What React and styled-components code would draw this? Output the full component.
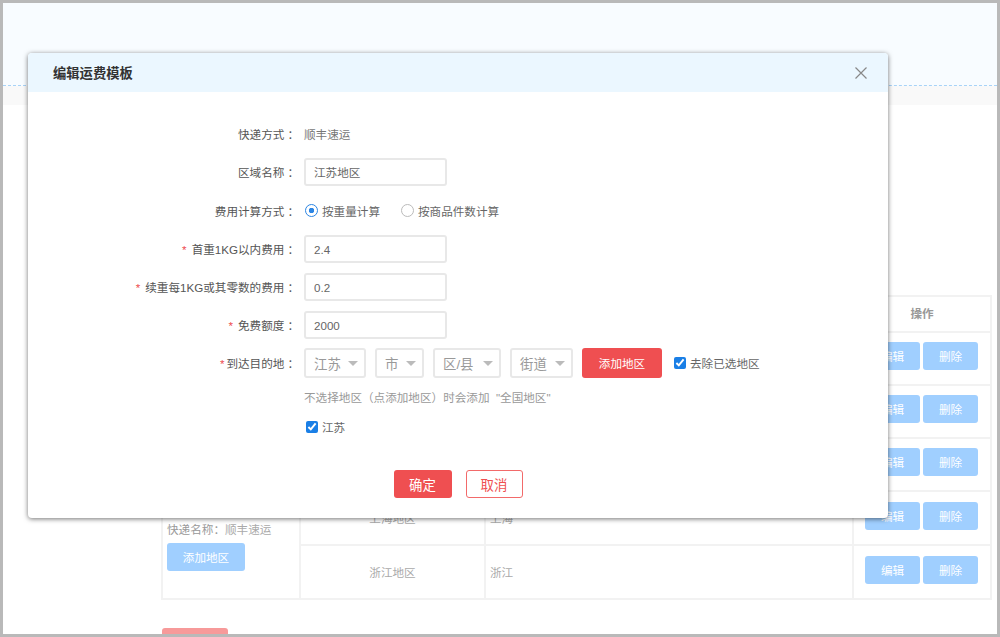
import React from 'react';
import styled, { createGlobalStyle } from 'styled-components';

const regions = [
  { name: '', area: '', height: 53 },
  { name: '', area: '', height: 53 },
  { name: '', area: '', height: 53 },
  { name: '上海地区', area: '上海', height: 54 },
  { name: '浙江地区', area: '浙江', height: 54 },
];

const fields = [
  { label: '首重1KG以内费用', value: '2.4' },
  { label: '续重每1KG或其零数的费用', value: '0.2' },
  { label: '免费额度', value: '2000' },
];

const selects = [
  { text: '江苏', width: 62 },
  { text: '市', width: 49 },
  { text: '区/县', width: 68 },
  { text: '街道', width: 63 },
];

const App = () => {
  return (
    <Page>
      <GlobalStyle />
      <Inner>
        <TopBand />
        <GreyBand />
        <TableWrap>
          <ShipTable>
            <colgroup>
              <col width="138" />
              <col width="185" />
              <col width="368" />
              <col width="138" />
            </colgroup>
            <thead>
              <tr>
                <HeadCell />
                <HeadCell />
                <HeadCell />
                <HeadCell>操作</HeadCell>
              </tr>
            </thead>
            <tbody>
              {regions.map((r, i) => (
                <BodyRow key={i} $height={r.height}>
                  {i === 0 && (
                    <InfoCell rowSpan={regions.length}>
                      <InfoText>快递名称：<span>顺丰速运</span></InfoText>
                      <LightButton $width={78}>添加地区</LightButton>
                    </InfoCell>
                  )}
                  <CenterCell>{r.name}</CenterCell>
                  <Cell>{r.area}</Cell>
                  <ActionCell>
                    <LightButton $width={55}>编辑</LightButton>
                    <LightButton $width={55}>删除</LightButton>
                  </ActionCell>
                </BodyRow>
              ))}
            </tbody>
          </ShipTable>
        </TableWrap>
        <PaleRedButton />

        <Dialog>
          <DialogHeader>
            <DialogTitle>编辑运费模板</DialogTitle>
            <CloseIcon viewBox="0 0 12 12">
              <path d="M0.5 0.5 L11.5 11.5 M11.5 0.5 L0.5 11.5" />
            </CloseIcon>
          </DialogHeader>
          <DialogBody>
            <FormRow>
              <Label>快递方式<Colon>：</Colon></Label>
              <PlainValue>顺丰速运</PlainValue>
            </FormRow>
            <FormRow>
              <Label>区域名称<Colon>：</Colon></Label>
              <TextInput defaultValue="江苏地区" />
            </FormRow>
            <FormRow $height={39}>
              <Label>费用计算方式<Colon>：</Colon></Label>
              <RadioGroup>
                <RadioItem><Radio $checked />按重量计算</RadioItem>
                <RadioItem><Radio />按商品件数计算</RadioItem>
              </RadioGroup>
            </FormRow>
            {fields.map((f) => (
              <FormRow key={f.label}>
                <Label><Star>*</Star>{f.label}<Colon>：</Colon></Label>
                <TextInput defaultValue={f.value} />
              </FormRow>
            ))}
            <FormRow>
              <Label><TightStar>*</TightStar>到达目的地<Colon>：</Colon></Label>
              <SelectRow>
                {selects.map((s) => (
                  <FakeSelect key={s.text} $width={s.width}>
                    {s.text}
                    <Caret />
                  </FakeSelect>
                ))}
                <AddButton>添加地区</AddButton>
                <CheckLabel $left={3}>
                  <CheckBox type="checkbox" defaultChecked />
                  去除已选地区
                </CheckLabel>
              </SelectRow>
            </FormRow>
            <HintRow>不选择地区（点添加地区）时会添加&nbsp;&nbsp;"全国地区"</HintRow>
            <PickedRow>
              <CheckLabel $left={2}>
                <CheckBox type="checkbox" defaultChecked />
                江苏
              </CheckLabel>
            </PickedRow>
            <DialogFooter>
              <PrimaryButton>确定</PrimaryButton>
              <OutlineButton>取消</OutlineButton>
            </DialogFooter>
          </DialogBody>
        </Dialog>
      </Inner>
    </Page>
  );
};

export default App;

const GlobalStyle = createGlobalStyle`
  html, body {
    margin: 0;
    padding: 0;
    background: #fff;
  }
  * {
    box-sizing: border-box;
  }
  body, input, button {
    font-family: "Liberation Sans", "Noto Sans CJK SC", sans-serif;
    font-size: 11.6px;
  }
`;

const Page = styled.div`
  width: 1000px;
  height: 637px;
  border: 3px solid #b9b9b9;
  overflow: hidden;
  background: #fff;
`;

const Inner = styled.div`
  position: relative;
  height: 100%;
`;

const TopBand = styled.div`
  height: 83px;
  background: #f8fcff;
  border-bottom: 1px dashed #a8d3f7;
`;

const GreyBand = styled.div`
  height: 19px;
  background: #f9f9f9;
`;

const TableWrap = styled.div`
  padding: 190px 6px 0 158px;
`;

const ShipTable = styled.table`
  width: 829px;
  table-layout: fixed;
  border-collapse: collapse;
  color: #aaa;
  background: #fff;
`;

const HeadCell = styled.th`
  height: 36px;
  padding: 0 0 2px;
  border: 2px solid #f2f2f2;
  color: #999;
  font-weight: 700;
  text-align: center;
`;

const BodyRow = styled.tr`
  height: ${(p) => p.$height}px;
`;

const Cell = styled.td`
  padding: 0 4px;
  border: 2px solid #f2f2f2;
`;

const CenterCell = styled(Cell)`
  text-align: center;
`;

const InfoCell = styled.td`
  padding: 0 4px 27px 4px;
  border: 2px solid #f2f2f2;
  vertical-align: bottom;
`;

const InfoText = styled.div`
  margin-bottom: 3px;
  line-height: 20px;
  color: #999;
  white-space: nowrap;

  span {
    color: #aaa;
  }
`;

const ActionCell = styled(Cell)`
  padding: 0 0 5px 11px;
  white-space: nowrap;

  button + button {
    margin-left: 3px;
  }
`;

const LightButton = styled.button`
  width: ${(p) => p.$width}px;
  height: 28px;
  padding: 0;
  border: 0;
  border-radius: 3px;
  background: #a0cfff;
  color: #fff;
  vertical-align: middle;
`;

const PaleRedButton = styled.div`
  width: 66px;
  height: 28px;
  margin: 28px 0 0 159px;
  border-radius: 3px;
  background: #f79a9a;
`;

const Dialog = styled.div`
  position: absolute;
  left: 25px;
  top: 50px;
  width: 860px;
  height: 465px;
  background: #fff;
  border-radius: 4px;
  box-shadow: 0 1px 5px rgba(0, 0, 0, 0.55);
  overflow: hidden;
`;

const DialogHeader = styled.div`
  display: flex;
  align-items: center;
  justify-content: space-between;
  height: 39px;
  padding: 0 21px 0 25px;
  background: #ebf7ff;
`;

const DialogTitle = styled.div`
  font-size: 13.3px;
  font-weight: 700;
  color: #333;
`;

const CloseIcon = styled.svg`
  width: 12px;
  height: 12px;
  stroke: #888;
  stroke-width: 1.2;
  fill: none;
`;

const DialogBody = styled.div`
  padding-top: 23px;
  color: #666;
`;

const FormRow = styled.div`
  display: flex;
  align-items: center;
  height: ${(p) => p.$height || 38}px;
`;

const Label = styled.div`
  flex: none;
  width: 271px;
  margin-right: 5px;
  text-align: right;
  color: #555;
  white-space: nowrap;
`;

const Colon = styled.span`
  margin-left: 3px;
`;

const Star = styled.span`
  margin-right: 5px;
  color: #ee4d50;
`;

const TightStar = styled(Star)`
  margin-right: 2px;
`;

const PlainValue = styled.div`
  color: #777;
`;

const TextInput = styled.input`
  width: 143px;
  height: 28px;
  padding: 0 8px;
  border: 2px solid #e8e8e8;
  border-radius: 3px;
  color: #666;
  outline: none;
`;

const RadioGroup = styled.div`
  display: flex;
  gap: 20px;
`;

const RadioItem = styled.label`
  display: flex;
  align-items: center;
  gap: 4px;
  color: #666;
`;

const Radio = styled.span`
  width: 13px;
  height: 13px;
  margin-left: 1px;
  border-radius: 50%;
  border: 1px solid ${(p) => (p.$checked ? '#2b85e4' : '#bbb')};
  background: ${(p) => (p.$checked ? 'radial-gradient(circle, #2b85e4 0, #2b85e4 2.5px, #fff 3px)' : '#fff')};
`;

const SelectRow = styled.div`
  display: flex;
  align-items: center;
  gap: 9px;
`;

const FakeSelect = styled.div`
  display: flex;
  align-items: center;
  justify-content: space-between;
  flex: none;
  width: ${(p) => p.$width}px;
  height: 30px;
  padding: 0 6px 0 8px;
  border: 2px solid #e8e8e8;
  border-radius: 3px;
  font-size: 13.4px;
  color: #999;
`;

const Caret = styled.span`
  width: 0;
  height: 0;
  border-left: 5px solid transparent;
  border-right: 5px solid transparent;
  border-top: 5px solid #bbb;
`;

const AddButton = styled.button`
  flex: none;
  width: 80px;
  height: 30px;
  padding: 0;
  border: 0;
  border-radius: 3px;
  background: #ef4f51;
  color: #fff;
`;

const CheckLabel = styled.label`
  display: flex;
  align-items: center;
  gap: 4px;
  margin-left: ${(p) => p.$left}px;
  color: #666;
  white-space: nowrap;
`;

const CheckBox = styled.input`
  width: 12px;
  height: 12px;
  margin: 0;
  accent-color: #1a7fe6;
`;

const HintRow = styled.div`
  height: 28px;
  margin-top: 2px;
  padding-left: 276px;
  line-height: 28px;
  color: #999;
`;

const PickedRow = styled.div`
  display: flex;
  align-items: center;
  height: 29px;
  padding-left: 276px;
`;

const DialogFooter = styled.div`
  display: flex;
  justify-content: center;
  gap: 14px;
  margin-top: 29px;
`;

const PrimaryButton = styled.button`
  width: 58px;
  height: 28px;
  padding: 0;
  border: 0;
  border-radius: 3px;
  background: #ef4f51;
  color: #fff;
  font-size: 13.4px;
`;

const OutlineButton = styled(PrimaryButton)`
  width: 57px;
  border: 1px solid #f26a6a;
  background: #fff;
  color: #ef4f51;
`;
